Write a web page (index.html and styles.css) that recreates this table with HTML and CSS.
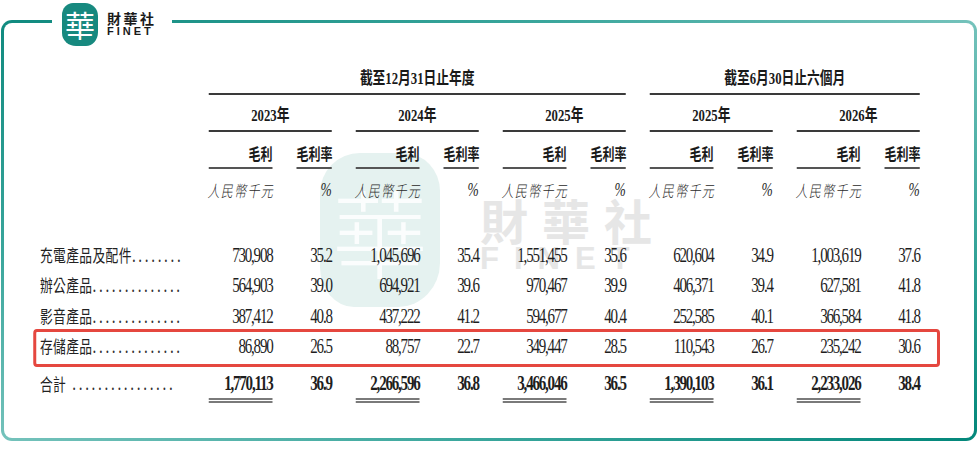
FILE: index.html
```html
<!DOCTYPE html>
<html lang="zh-Hant">
<head>
<meta charset="utf-8">
<title>毛利</title>
<link rel="stylesheet" href="styles.css">
</head>
<body>
<div class="frame">
  <div class="logo">
    <div class="logo-mark">華</div>
    <div class="logo-text">
      <div class="logo-cn">財華社</div>
      <div class="logo-en">FINET</div>
    </div>
  </div>

  <div class="watermark">
    <div class="wm-mark">華</div>
    <div class="wm-text">
      <div class="wm-cn">財華社</div>
      <div class="wm-en">FINET</div>
    </div>
  </div>

  <div class="sheet">
    <div class="row r-period">
      <div class="period p1">截至12月31日止年度</div>
      <div class="period p2">截至6月30日止六個月</div>
    </div>
    <div class="row r-year">
      <div class="yr first">2023年</div>
      <div class="yr">2024年</div>
      <div class="yr">2025年</div>
      <div class="yr">2025年</div>
      <div class="yr">2026年</div>
    </div>
    <div class="row r-sub">
      <div class="blank"></div>
      <div class="sub">毛利</div><div class="sub">毛利率</div>
      <div class="sub">毛利</div><div class="sub">毛利率</div>
      <div class="sub">毛利</div><div class="sub">毛利率</div>
      <div class="sub">毛利</div><div class="sub">毛利率</div>
      <div class="sub">毛利</div><div class="sub">毛利率</div>
    </div>
    <div class="row r-unit">
      <div class="blank"></div>
      <div class="unit"><span class="it">人民幣千元</span></div><div class="pct">%</div>
      <div class="unit"><span class="it">人民幣千元</span></div><div class="pct">%</div>
      <div class="unit"><span class="it">人民幣千元</span></div><div class="pct">%</div>
      <div class="unit"><span class="it">人民幣千元</span></div><div class="pct">%</div>
      <div class="unit"><span class="it">人民幣千元</span></div><div class="pct">%</div>
    </div>

    <div class="row data first-data">
      <div class="label"><span class="lbl">充電產品及配件</span><span class="dots">........</span></div>
      <div class="num">730,908</div><div class="num">35.2</div>
      <div class="num">1,045,696</div><div class="num">35.4</div>
      <div class="num">1,551,455</div><div class="num">35.6</div>
      <div class="num">620,604</div><div class="num">34.9</div>
      <div class="num">1,003,619</div><div class="num">37.6</div>
    </div>
    <div class="row data">
      <div class="label"><span class="lbl">辦公產品</span><span class="dots">..............</span></div>
      <div class="num">564,903</div><div class="num">39.0</div>
      <div class="num">694,921</div><div class="num">39.6</div>
      <div class="num">970,467</div><div class="num">39.9</div>
      <div class="num">406,371</div><div class="num">39.4</div>
      <div class="num">627,581</div><div class="num">41.8</div>
    </div>
    <div class="row data">
      <div class="label"><span class="lbl">影音產品</span><span class="dots">..............</span></div>
      <div class="num">387,412</div><div class="num">40.8</div>
      <div class="num">437,222</div><div class="num">41.2</div>
      <div class="num">594,677</div><div class="num">40.4</div>
      <div class="num">252,585</div><div class="num">40.1</div>
      <div class="num">366,584</div><div class="num">41.8</div>
    </div>
    <div class="row data hl">
      <div class="label"><span class="lbl">存儲產品</span><span class="dots">..............</span></div>
      <div class="num">86,890</div><div class="num">26.5</div>
      <div class="num">88,757</div><div class="num">22.7</div>
      <div class="num">349,447</div><div class="num">28.5</div>
      <div class="num">110,543</div><div class="num">26.7</div>
      <div class="num">235,242</div><div class="num">30.6</div>
    </div>
    <div class="row data total">
      <div class="label"><span class="lbl">合計</span><span class="dots gap">................</span></div>
      <div class="num amt">1,770,113</div><div class="num">36.9</div>
      <div class="num amt">2,266,596</div><div class="num">36.8</div>
      <div class="num amt">3,466,046</div><div class="num">36.5</div>
      <div class="num amt">1,390,103</div><div class="num">36.1</div>
      <div class="num amt">2,233,026</div><div class="num">38.4</div>
    </div>
  </div>
</div>
</body>
</html>
```

FILE: styles.css
```css
* { box-sizing: border-box; }

html, body {
  margin: 0;
  padding: 0;
  background: #fff;
  overflow: hidden;
}

body {
  width: 977px;
  height: 461px;
  font-family: "Liberation Serif", "Noto Sans CJK TC", serif;
  color: #1e1e1e;
}

.frame {
  position: relative;
  margin: 20px 0 0 1px;
  width: 976px;
  height: 421px;
  border: 3px solid transparent;
  border-radius: 11px;
  background:
    linear-gradient(#fff, #fff) padding-box,
    linear-gradient(to bottom right, #108a7f 0%, #3aa69c 28%, #74c2bb 50%, #3ba79d 74%, #02877a 100%) border-box;
}

/* ---------- top logo ---------- */
.logo {
  position: absolute;
  left: 48px;
  top: -23px;
  z-index: 2;
  width: 120px;
  height: 48px;
  background: #fff;
  display: flex;
  align-items: center;
  gap: 9px;
  padding-left: 10px;
}

.logo-mark {
  flex: none;
  width: 36px;
  height: 43px;
  background: #17897f;
  color: #fff;
  border-radius: 11px 13px 12px 14px / 12px 13px 14px 13px;
  display: flex;
  align-items: center;
  justify-content: center;
  font: 400 30px/1 "Noto Sans CJK TC", sans-serif;
}

.logo-text {
  flex: none;
  margin-top: -1px;
  display: flex;
  flex-direction: column;
}

.logo-cn {
  font: 700 14px/15px "Noto Sans CJK TC", sans-serif;
  letter-spacing: 2.5px;
  color: #1a1a1a;
}

.logo-en {
  font: 700 11px/10px "Liberation Sans", sans-serif;
  letter-spacing: 3px;
  color: #1a1a1a;
}

/* ---------- watermark ---------- */
.watermark {
  position: absolute;
  left: 316px;
  top: 130px;
  display: flex;
  align-items: flex-start;
  gap: 40px;
  z-index: 0;
}

.wm-mark {
  width: 120px;
  height: 154px;
  background: #e5f2f0;
  color: #fbfdfd;
  border-radius: 40px 36px 42px 34px / 40px 38px 44px 40px;
  display: flex;
  align-items: center;
  justify-content: center;
  font: 300 96px/1 "Noto Sans CJK TC", sans-serif;
}

.wm-text {
  margin-top: 38px;
  display: flex;
  flex-direction: column;
}

.wm-cn {
  font: 700 48px/56px "Noto Sans CJK TC", sans-serif;
  letter-spacing: 14px;
  color: #e6e6e6;
}

.wm-en {
  font: 700 31px/24px "Liberation Sans", sans-serif;
  letter-spacing: 15px;
  color: #e6e6e6;
}

/* ---------- table (horizontally condensed like the printed source) ---------- */
.sheet {
  position: relative;
  z-index: 1;
  width: 1293px;
  padding-top: 46px;
  transform: scaleX(0.75);
  transform-origin: 0 0;
}

.row {
  display: grid;
  grid-template-columns: 193px repeat(5, 85px 47px);
  column-gap: 32px;
  padding-left: 48px;
}

.period {
  font: 700 17px/20px "Liberation Serif", "Noto Sans CJK TC", serif;
  text-align: center;
  padding-bottom: 4px;
  border-bottom: 2px solid #3a3a3a;
  color: #1a1a1a;
}
.p1 { grid-column: 2 / 8; }
.p2 { grid-column: 8 / 12; }

.yr {
  grid-column: span 2;
  font: 700 17px/20px "Liberation Serif", "Noto Sans CJK TC", serif;
  text-align: center;
  padding-top: 11px;
  padding-bottom: 4px;
  border-bottom: 2px solid #3a3a3a;
  color: #1a1a1a;
}
.yr.first { grid-column: 2 / span 2; }

.sub {
  font: 700 16px/20px "Noto Sans CJK TC", sans-serif;
  text-align: right;
  padding-top: 11px;
  padding-bottom: 4px;
  border-bottom: 2px solid #555;
  color: #1a1a1a;
  white-space: nowrap;
}

.unit {
  padding-top: 11px;
  white-space: nowrap;
}

.it {
  display: inline-block;
  font: 300 16px/20px "Noto Sans CJK TC", sans-serif;
  letter-spacing: 1.8px;
  color: #2a2a2a;
  transform: skewX(-14deg);
}

.pct {
  font: italic 400 18px/20px "Liberation Serif", serif;
  text-align: right;
  padding-top: 11px;
  color: #2a2a2a;
}

.data {
  height: 30.5px;
}
.data.first-data { margin-top: 38.75px; }

.label {
  display: flex;
  line-height: 30.5px;
  white-space: nowrap;
}

.lbl {
  flex: none;
  font: 400 17px/30.5px "Noto Sans CJK TC", sans-serif;
  letter-spacing: 0.5px;
  color: #222;
}

.dots {
  flex: none;
  font: 400 20px/30.5px "Liberation Serif", serif;
  letter-spacing: 3.6px;
  color: #333;
}
.dots.gap { margin-left: 8px; }

.num {
  font: 400 20px/30.5px "Liberation Serif", serif;
  letter-spacing: -1.6px;
  text-align: right;
  white-space: nowrap;
}

.hl { position: relative; }
.hl::after {
  content: "";
  position: absolute;
  left: 38.7px;
  top: -2.25px;
  width: 1201px;
  height: 32px;
  border-style: solid;
  border-color: #e5473f;
  border-width: 3px 4px;
  border-radius: 5px / 4px;
}

.total {
  margin-top: 6.75px;
  height: auto;
}
.total .lbl { line-height: 29px; }
.total .dots { line-height: 29px; }
.total .num {
  font-weight: 700;
  line-height: 29px;
}
.total .amt {
  border-bottom: 5px double #7a7a7a;
}
```
